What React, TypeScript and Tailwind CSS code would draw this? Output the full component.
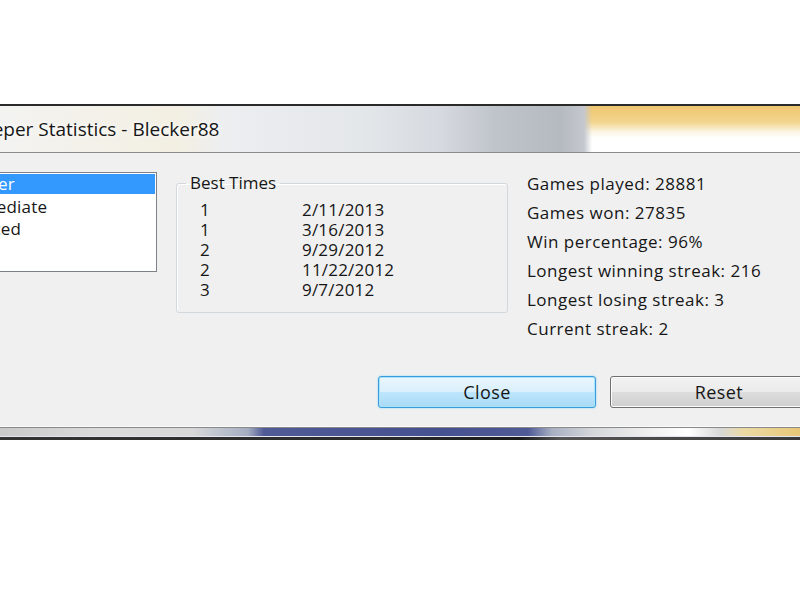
import React from 'react'

const levels = ['Beginner', 'Intermediate', 'Advanced']

const bestTimes = [
  { rank: '1', date: '2/11/2013' },
  { rank: '1', date: '3/16/2013' },
  { rank: '2', date: '9/29/2012' },
  { rank: '2', date: '11/22/2012' },
  { rank: '3', date: '9/7/2012' },
]

const stats = [
  'Games played: 28881',
  'Games won: 27835',
  'Win percentage: 96%',
  'Longest winning streak: 216',
  'Longest losing streak: 3',
  'Current streak: 2',
]

const App: React.FC = () => {
  return (
    <div className="w-[800px] h-[600px] bg-white overflow-hidden font-['Open_Sans',sans-serif] font-medium text-[#161616]">
      <div className="h-[104px]" />

      {/* dialog */}
      <div className="w-[800px] overflow-hidden">
        {/* ? title bar */}
        <div className="h-[2px] bg-[#2a2a2a]" />
        <div className="h-[46px] flex items-center bg-[linear-gradient(to_right,#f3f3f1_0%,#f3efe2_22%,#eceef0_28%,#e4e7ea_45%,#d6dae0_55%,#bfc3ca_62%,#b5b9c0_70%,#c4c8ce_73%,transparent_74%),linear-gradient(to_bottom,#eec66f_0%,#f2d48e_35%,#fbf3df_55%,#ffffff_70%,#ffffff_100%)]">
          <div className="ml-[-86px] whitespace-nowrap text-[19px] font-normal leading-none [text-shadow:0_0_8px_#ffffff,0_0_4px_#ffffff]">
            Minesweeper Statistics - Blecker88
          </div>
        </div>
        <div className="h-px bg-[#8c8c8c]" />

        {/* ? body */}
        <div className="h-[273px] bg-[#f0f0f0] flex flex-col text-[17px]">
          <div className="h-[223px] flex items-start whitespace-nowrap">
            <div className="mt-[19px] ml-[-62px] w-[219px] h-[100px] border border-[#7d8188] bg-white p-px leading-[22px] tracking-[0.2px]">
              {levels.map((level, i) => (
                <div
                  key={level}
                  className={i === 0 ? 'h-[20px] leading-[20px] mb-[2px] bg-[#3399ff] text-white pl-[2px]' : 'h-[22px] pl-[2px]'}
                >
                  {level}
                </div>
              ))}
            </div>

            <fieldset className="ml-[19px] mt-[20px] w-[332px] h-[140px] border border-[#d3d8dc] rounded-[3px] shadow-[inset_1px_1px_0_#ffffff]">
              <legend className="ml-[9px] px-[4px] leading-[20px]">Best Times</legend>
              <div className="pt-[7px] pl-[23px] grid grid-cols-[102px_1fr] leading-[20px] tracking-[0.2px]">
                {bestTimes.map((t, i) => (
                  <React.Fragment key={i}>
                    <div>{t.rank}</div>
                    <div>{t.date}</div>
                  </React.Fragment>
                ))}
              </div>
            </fieldset>

            <div className="ml-[19px] pt-[16px] leading-[29px] tracking-[0.5px]">
              {stats.map((s) => (
                <div key={s}>{s}</div>
              ))}
            </div>
          </div>

          <div className="h-[32px] flex gap-[14px] pl-[378px]">
            <button className="w-[218px] h-[32px] shrink-0 rounded-[3px] border border-[#3c9ad8] bg-[linear-gradient(to_bottom,#eaf6fd_0%,#d9f0fc_50%,#bee6fd_51%,#a7d9f5_100%)] shadow-[inset_0_0_0_1px_#a6e4ff,0_0_2px_#7fd0f7] text-[18px] tracking-[0.4px] leading-none">
              Close
            </button>
            <button className="w-[218px] h-[32px] shrink-0 rounded-[3px] border border-[#707070] bg-[linear-gradient(to_bottom,#f2f2f2_0%,#ebebeb_50%,#dddddd_51%,#cfcfcf_100%)] shadow-[inset_0_0_0_1px_#fcfcfc] text-[18px] tracking-[0.4px] leading-none">
              Reset
            </button>
          </div>
        </div>

        {/* ? bottom frame */}
        <div className="h-px bg-[#fafafa]" />
        <div className="h-px bg-[#8a8a8a]" />
        <div className="h-[8px] bg-[linear-gradient(to_right,#c9c9c9_0%,#dadada_12%,#d8d8d8_24%,#b9c0cc_28%,#a5adc2_31%,#4f5a97_33%,#46528f_55%,#4f5a97_66%,#a8b0c2_69%,#d4d6da_74%,#ececec_80%,#ffffff_86%,#d8d8d8_90%,#ebd9a4_93%,#e8c878_100%)]" />
        <div className="h-px bg-[#e4e6ee]" />
        <div className="h-[3px] bg-[linear-gradient(to_right,#333333_0%,#2a2a2a_50%,#1a1a1a_65%,#555555_70%,#3a3a3a_100%)]" />
      </div>
    </div>
  )
}

export default App
